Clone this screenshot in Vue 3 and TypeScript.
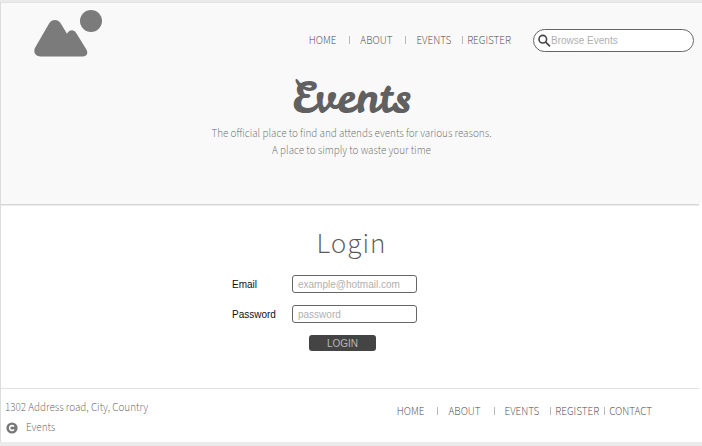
<script setup lang="ts">
import { ref } from 'vue'

interface NavLink {
  label: string
  tight?: boolean
}

const links: NavLink[] = [
  { label: 'HOME' },
  { label: 'ABOUT' },
  { label: 'EVENTS' },
  { label: 'REGISTER', tight: true },
]
const footerLinks: NavLink[] = [...links, { label: 'CONTACT', tight: true }]

const query = ref('')
const email = ref('')
const password = ref('')
</script>

<template>
  <div class="page">
    <header class="hero">
      <div class="topbar">
        <a class="logo" href="#" aria-label="Events">
          <svg width="70" height="48" viewBox="0 0 70 48" aria-hidden="true">
            <circle cx="57" cy="11" r="11" />
            <path d="M1.2 37.5 L14.5 14.5 C17.5 8.6 24.3 8.6 27.4 14.5 L33 23.8 C35.5 19.2 40 19.2 42.5 23.6 L52.4 39.6 C54.6 43.6 52.5 46.5 48.5 46.5 H6.5 C1.5 46.5 -1.3 42 1.2 37.5 Z" />
          </svg>
        </a>
        <nav class="nav">
          <a v-for="l in links" :key="l.label" href="#" :class="{ tight: l.tight }">{{ l.label }}</a>
        </nav>
        <label class="search">
          <svg width="13" height="13" viewBox="0 0 13 13" aria-hidden="true">
            <circle cx="4.8" cy="5.2" r="3.8" />
            <path d="M7.7 8.1 L12 12.4" />
          </svg>
          <input v-model="query" type="search" placeholder="Browse Events" aria-label="Browse Events" />
        </label>
      </div>
      <h1>Events</h1>
      <p>The official place to find and attends events for various reasons.</p>
      <p>A place to simply to waste your time</p>
    </header>

    <main>
      <h2>Login</h2>
      <form @submit.prevent>
        <label for="email">Email</label>
        <input id="email" v-model="email" type="email" placeholder="example@hotmail.com" />
        <label for="password">Password</label>
        <input id="password" v-model="password" type="password" placeholder="password" />
        <button type="submit">LOGIN</button>
      </form>
    </main>

    <footer>
      <div class="about">
        <address>1302 Address road, City, Country</address>
        <div class="copy">
          <svg width="12" height="12" viewBox="0 0 12 12" aria-hidden="true">
            <circle cx="6" cy="6" r="5.6" />
            <path d="M8 4.6 A2.4 2.4 0 1 0 8 7.4" />
          </svg>
          <span>Events</span>
        </div>
      </div>
      <nav class="nav">
        <a v-for="l in footerLinks" :key="l.label" href="#" :class="{ tight: l.tight }">{{ l.label }}</a>
      </nav>
    </footer>
  </div>
</template>

<style>
body {
  background: #ebebeb;
}
</style>

<style scoped>
.page {
  margin: 2px 0 4px;
  border-left: 1px solid #dcdcdc;
  border-top: 1px solid #e2e2e2;
  background: #fff;
  color: #606060;
  font-family: "Source Sans 3", "Noto Sans CJK SC", sans-serif;
  font-weight: 300;
  font-size: 11px;
  line-height: 17px;
}
.hero {
  box-sizing: border-box;
  min-height: 201px;
  background: #f9f9f9;
  text-align: center;
}
.topbar {
  display: flex;
  align-items: flex-start;
  padding: 7px 8px 0 33px;
}
.logo {
  height: 48px;
  margin-right: auto;
  fill: #7b7b7b;
}
.nav {
  display: flex;
  white-space: nowrap;
}
.topbar .nav {
  padding-top: 22px;
}
.nav a {
  color: #484848;
  text-decoration: none;
}
.nav a + a::before {
  content: "";
  display: inline-block;
  width: 1px;
  height: 8px;
  margin: 0 10px 0 13px;
  background: #b8b8b8;
}
.nav a.tight::before {
  margin: 0 4px 0 11px;
}
.nav a.tight + a.tight::before {
  margin: 0 4px 0 5px;
}
.search {
  box-sizing: border-box;
  display: flex;
  align-items: center;
  width: 161px;
  height: 23px;
  margin: 19px 0 0 22px;
  padding: 0 10px 0 4px;
  border: 1px solid #666;
  border-radius: 12px;
  background: #fff;
}
.search svg {
  flex: none;
  fill: none;
  stroke: #444;
  stroke-width: 1.6;
}
input {
  box-sizing: border-box;
  min-width: 0;
  font: 10px "Liberation Sans", Arial, sans-serif;
  color: #444;
  outline: none;
}
input::placeholder {
  color: #b0b0b0;
  opacity: 1;
}
.search input {
  flex: 1;
  padding: 0;
  border: 0;
  background: none;
}
h1 {
  margin: 17px 0 4px;
  color: #606060;
  font: 400 44px/46px "Leckerli One", cursive;
}
p {
  margin: 0;
  color: #686868;
}
main {
  margin-right: 3px;
  padding: 19px 0 37px 3px;
  border-top: 1px solid #d6d6d6;
  box-shadow: inset 0 1px #ececec;
}
h2 {
  margin: 0;
  color: #585858;
  font-size: 29px;
  font-weight: 300;
  line-height: 40px;
  letter-spacing: 1px;
  text-align: center;
}
form {
  display: grid;
  grid-template-columns: 60px 125px 54px;
  justify-content: center;
  align-items: center;
  row-gap: 12px;
  margin-top: 11px;
}
form label {
  grid-column: 1;
  color: #111;
  font: 10px "Liberation Sans", Arial, sans-serif;
}
form input {
  height: 18px;
  padding: 0 5px;
  border: 1px solid #666;
  border-radius: 3px;
  background: #fff;
}
button {
  grid-column: 2;
  width: 67px;
  height: 16px;
  margin-left: 17px;
  padding: 0;
  border: 0;
  border-radius: 3px;
  background: #444;
  color: #b8b8b8;
  font: 10px "Liberation Sans", Arial, sans-serif;
}
footer {
  display: flex;
  justify-content: space-between;
  margin-right: 3px;
  padding: 10px 47px 6px 4px;
  border-top: 1px solid #e2e2e2;
}
footer .nav {
  padding-top: 4px;
}
address {
  font-style: normal;
}
.copy {
  display: flex;
  align-items: center;
  gap: 8px;
  margin-top: 3px;
  padding-left: 1px;
}
.copy circle {
  fill: #777;
}
.copy path {
  fill: none;
  stroke: #fff;
  stroke-width: 1.6;
}
</style>
